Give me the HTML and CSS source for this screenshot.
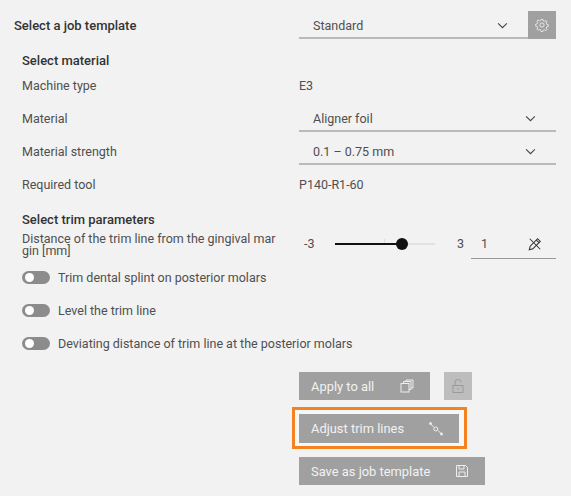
FILE: index.html
```html
<!DOCTYPE html>
<html lang="en">
<head>
    <meta charset="UTF-8">
    <title>Job template</title>
    <link rel="stylesheet" href="styles.css">
</head>
<body>
    <div class="panel">
        <!-- Job template -->
        <div class="template-row">
            <div class="heading">Select a job template</div>
            <div class="template-field">
                <div class="select">
                    <span>Standard</span>
                    <svg class="chevron" viewBox="0 0 12 8"><path d="M1 1.5l5 5 5-5"/></svg>
                </div>
                <div class="icon-btn">
                    <svg viewBox="0 0 16 16" class="btn-icon gear"><path d="M7 1.500h2l.4 1.800 1.400.6 1.600-1 1.400 1.400-1 1.600.6 1.400 1.800.4v2l-1.800.4-.6 1.400 1 1.600-1.400 1.400-1.600-1-1.400.6-.4 1.400H7l-.4-1.800-1.400-.6-1.600 1-1.400-1.400 1-1.600-.6-1.400-1.800-.4V7l1.800-.4.6-1.400-1-1.600 1.400-1.400 1.600 1 1.400-.6z"/><circle cx="8" cy="8" r="2.400"/></svg>
                </div>
            </div>
        </div>

        <!-- Material -->
        <div class="section">
            <div class="heading">Select material</div>
            <div class="row"><span>Machine type</span><span>E3</span></div>
            <div class="row">
                <span>Material</span>
                <div class="select">
                    <span>Aligner foil</span>
                    <svg class="chevron" viewBox="0 0 12 8"><path d="M1 1.5l5 5 5-5"/></svg>
                </div>
            </div>
            <div class="row">
                <span>Material strength</span>
                <div class="select">
                    <span>0.1 – 0.75 mm</span>
                    <svg class="chevron" viewBox="0 0 12 8"><path d="M1 1.5l5 5 5-5"/></svg>
                </div>
            </div>
            <div class="row"><span>Required tool</span><span>P140-R1-60</span></div>
        </div>

        <!-- Trim parameters -->
        <div class="section trim">
            <div class="heading">Select trim parameters</div>
            <div class="distance">
                <div class="distance-label">Distance of the trim line from the gingival mar<br>gin [mm]</div>
                <div class="slider-wrap">
                    <span class="min">-3</span>
                    <div class="slider">
                        <div class="track"></div>
                        <div class="tick"></div>
                        <div class="fill"></div>
                        <div class="thumb"></div>
                    </div>
                    <span class="max">3</span>
                    <div class="value-box">
                        <span>1</span>
                        <svg viewBox="0 0 16 16" class="pen"><path d="M1.500 14.500l1-4L11 2l3 3-8.500 8.500z"/><path d="M2 2l12 12M9.500 3.500l3 3"/></svg>
                    </div>
                </div>
            </div>
            <div class="toggle-row first"><span class="toggle"></span>Trim dental splint on posterior molars</div>
            <div class="toggle-row"><span class="toggle"></span>Level the trim line</div>
            <div class="toggle-row"><span class="toggle"></span>Deviating distance of trim line at the posterior molars</div>
        </div>

        <!-- Actions -->
        <div class="actions">
            <div class="action-line">
                <div class="btn apply">Apply to all
                    <svg viewBox="0 0 14 14" class="btn-icon"><rect x="1" y="4.500" width="8" height="8.500"/><path d="M3.500 4.500V2.500h7.500v8H9M6 2.500V1h7v8h-2"/></svg>
                </div>
                <div class="icon-btn lock">
                    <svg viewBox="0 0 14 14" class="btn-icon dim"><rect x="2" y="6.500" width="10" height="7"/><path d="M4 6.500V3a3 2.500 0 0 1 6 0v.5"/><path d="M7 9v2"/></svg>
                </div>
            </div>
            <div class="highlight">
                <div class="btn adjust">Adjust trim lines
                    <svg viewBox="0 0 14 14" class="btn-icon"><path d="M1 1.500l3.800 3.500M9 8.500l3 3"/><circle cx="6.800" cy="7" r="2"/><circle cx="1.500" cy="1.500" r="1" class="dot"/><circle cx="12.500" cy="12" r="1" class="dot"/></svg>
                </div>
            </div>
            <div class="btn save">Save as job template
                <svg viewBox="0 0 14 14" class="btn-icon"><path d="M1.500 1.500h9l2 2v9h-11z"/><path d="M4 1.500v3.500h5V1.500M4 12.500V8h6v4.500"/></svg>
            </div>
        </div>
    </div>
</body>
</html>
```

FILE: styles.css
```css
body {
    margin: 0;
    background-color: #f2f2f2;
    font-family: Roboto, Arial, sans-serif;
    font-size: 12.5px;
    color: #4f4f4f;
}
.panel {
    width: 571px;
    height: 496px;
    padding: 11px 15px 0 14px;
    box-sizing: border-box;
    overflow: hidden;
}
.heading {
    font-size: 13px;
    font-weight: 500;
    color: #333;
    line-height: 16px;
}
.template-row {
    display: flex;
    justify-content: space-between;
    height: 28px;
}
.template-row .heading {
    line-height: 30px;
}
.template-field {
    display: flex;
    width: 257px;
}
.template-field .select {
    flex: 1;
    height: 28px;
    padding-top: 2px;
}
.select {
    display: flex;
    align-items: center;
    justify-content: space-between;
    width: 100%;
    height: 27px;
    box-sizing: border-box;
    padding: 1px 20px 0 14px;
    border-bottom: 2px solid #bababa;
}
.chevron {
    width: 11px;
    height: 7px;
    fill: none;
    stroke: #444;
    stroke-width: 1.2;
}
.icon-btn {
    display: flex;
    align-items: center;
    justify-content: center;
    width: 28px;
    height: 28px;
    background-color: #a0a0a0;
}
.btn-icon {
    width: 14px;
    height: 14px;
    fill: none;
    stroke: #eee;
    stroke-width: 1;
}
.btn-icon.dim {
    stroke: #9a9a9a;
}
.btn-icon .dot {
    fill: #eee;
}
.section {
    padding-left: 8px;
}
.section > .heading {
    padding-top: 14px;
}
.row {
    display: grid;
    grid-template-columns: 277px 257px;
    align-items: center;
    height: 33px;
}
.trim > .heading {
    padding-top: 11px;
}
.distance {
    display: grid;
    grid-template-columns: 277px 257px;
    margin-top: 5px;
}
.distance-label {
    line-height: 12px;
    white-space: nowrap;
}
.slider-wrap {
    display: flex;
    align-items: flex-start;
    height: 26px;
    line-height: 22px;
}
.min {
    flex: none;
    width: 36px;
    padding-left: 5px;
    box-sizing: border-box;
}
.max {
    flex: none;
    width: 8px;
    margin-left: 22px;
}
.slider {
    flex: none;
    position: relative;
    width: 100px;
    height: 14px;
    margin-top: 4px;
}
.track {
    position: absolute;
    left: 0;
    right: 0;
    top: 6px;
    height: 2px;
    background-color: #e2e2e2;
}
.tick {
    position: absolute;
    left: 49px;
    top: 2px;
    width: 1px;
    height: 5px;
    background-color: #ddd;
}
.fill {
    position: absolute;
    left: 0;
    top: 6px;
    width: 67px;
    height: 2px;
    background-color: #111;
}
.thumb {
    position: absolute;
    left: 61px;
    top: 1px;
    width: 12px;
    height: 12px;
    border-radius: 50%;
    background-color: #111;
}
.value-box {
    flex: none;
    display: flex;
    justify-content: space-between;
    width: 85px;
    height: 26px;
    box-sizing: border-box;
    margin-left: 6px;
    padding: 0 14px 0 10px;
    border-bottom: 1px solid #999;
}
.pen {
    width: 14px;
    height: 14px;
    margin-top: 4px;
    fill: none;
    stroke: #333;
    stroke-width: 1.2;
}
.toggle-row {
    display: flex;
    align-items: center;
    height: 33px;
}
.toggle-row.first {
    margin-top: 2px;
}
.toggle {
    position: relative;
    width: 28px;
    height: 13px;
    margin-right: 8px;
    border-radius: 7px;
    background-color: #8c8c8c;
}
.toggle::after {
    content: "";
    position: absolute;
    left: 3px;
    top: 2px;
    width: 9px;
    height: 9px;
    border-radius: 50%;
    background-color: #fff;
}
.actions {
    display: flex;
    flex-direction: column;
    align-items: flex-start;
    margin-left: 285px;
    margin-top: 12px;
}
.action-line {
    display: flex;
    gap: 14px;
}
.btn {
    display: flex;
    align-items: center;
    justify-content: space-between;
    height: 28px;
    box-sizing: border-box;
    padding: 0 16px 0 12px;
    font-size: 12.9px;
    background-color: #a0a0a0;
    color: #f2f2f2;
}
.apply {
    width: 131px;
}
.lock {
    background-color: #bdbdbd;
}
.highlight {
    margin: 7px 0 8px -7px;
    padding: 4px 5px 3px 4px;
    border: 3px solid #f58220;
    background-color: #f7f7f7;
}
.adjust {
    width: 160px;
    height: 29px;
}
.save {
    width: 186px;
}
```
